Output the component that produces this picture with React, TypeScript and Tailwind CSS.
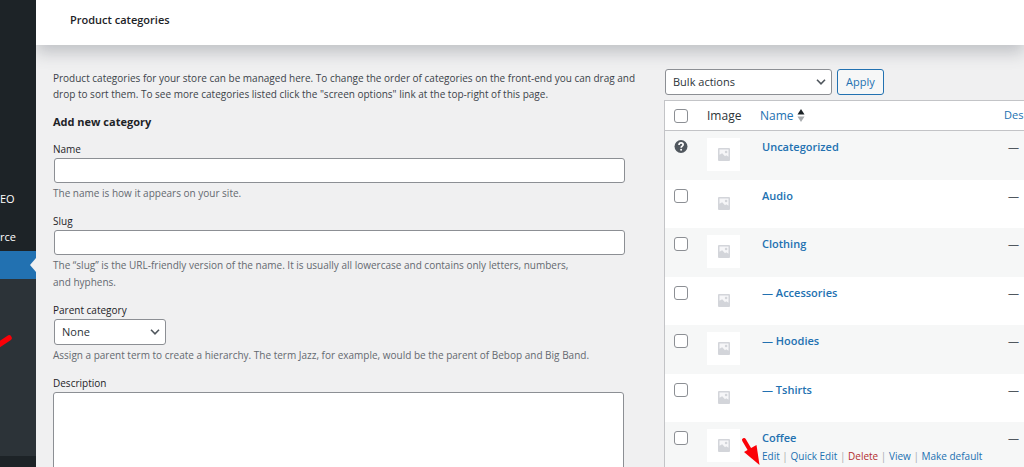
import React, { useState } from "react"

type Category = { name: string; locked?: boolean; actions?: boolean }

const CATEGORIES: Category[] = [
  { name: "Uncategorized", locked: true },
  { name: "Audio" },
  { name: "Clothing" },
  { name: "— Accessories" },
  { name: "— Hoodies" },
  { name: "— Tshirts" },
  { name: "Coffee", actions: true },
]

function Placeholder() {
  return (
    <div className="w-[33px] h-[33px] bg-white flex items-center justify-center">
      <svg width="12" height="13" viewBox="0 0 12 13" aria-hidden="true">
        <rect width="12" height="13" rx="1" fill="#d3d5da" />
        <path d="M1.5 1.5h9v7.300L8.200 7.200 7 8.300 4.200 5.200 1.500 6.800z" fill="#f6f6f8" />
        <circle cx="8.1" cy="4" r="1.300" fill="#d3d5da" />
      </svg>
    </div>
  )
}

function Chevron() {
  return (
    <svg
      className="absolute right-[6px] top-1/2 -translate-y-1/2 pointer-events-none"
      width="10"
      height="6"
      viewBox="0 0 10 6"
      fill="none"
      aria-hidden="true"
    >
      <path d="M1 0.8 5 4.8 9 0.8" stroke="#50575e" strokeWidth="1.6" />
    </svg>
  )
}

function Tick({ label }: { label: string }) {
  return (
    <input
      type="checkbox"
      aria-label={label}
      className="block appearance-none w-[14px] h-[14px] rounded-[3px] border border-[#8c8f94] bg-white checked:bg-[#2271b1]"
    />
  )
}

function Sidebar() {
  return (
    <nav className="w-9 shrink-0 overflow-hidden bg-[#1d2327] text-white leading-[38px] pt-[180px]">
      <a href="#seo" className="block">EO</a>
      <a href="#commerce" className="block h-[33px]">rce</a>
      <a href="#products" aria-label="Products" className="flex h-7 items-center justify-end bg-[#2271b1]">
        <svg width="6" height="14" viewBox="0 0 6 14" aria-hidden="true">
          <path d="M6 0v14L0 7z" fill="#f0f0f1" />
        </svg>
      </a>
      <div className="h-[177px] bg-[#2c3338] pt-[52px]">
        <svg width="14" height="20" viewBox="0 0 14 20" aria-hidden="true">
          <path d="M-3 15 9 7" stroke="#fb0007" strokeWidth="5.500" strokeLinecap="round" />
        </svg>
      </div>
    </nav>
  )
}

const field = "block w-full border border-[#8c8f94] rounded-[3px] bg-white px-[7px] outline-none focus:border-[#2271b1]"
const label = "block leading-4 mb-px text-[#1d2327]"
const help = "mt-0.5 leading-[17px] text-[#646970]"

function CategoryForm() {
  return (
    <form className="mt-[10px] mr-10 flex flex-col gap-[11px]" onSubmit={(e) => e.preventDefault()}>
      <div>
        <label htmlFor="name" className={label}>Name</label>
        <input id="name" className={`${field} ml-px h-[25px]`} />
        <p className={help}>The name is how it appears on your site.</p>
      </div>
      <div>
        <label htmlFor="slug" className={label}>Slug</label>
        <input id="slug" className={`${field} ml-px h-[25px]`} />
        <p className={`${help} max-w-[530px]`}>
          The “slug” is the URL-friendly version of the name. It is usually all lowercase and
          contains only letters, numbers, and hyphens.
        </p>
      </div>
      <div>
        <label htmlFor="parent" className={label}>Parent category</label>
        <div className="relative ml-px w-28">
          <select id="parent" className={`${field} h-[26px] appearance-none text-[11px] text-[#2c3338]`}>
            <option>None</option>
          </select>
          <Chevron />
        </div>
        <p className={help}>
          Assign a parent term to create a hierarchy. The term Jazz, for example, would be the
          parent of Bebop and Big Band.
        </p>
      </div>
      <div>
        <label htmlFor="description" className={label}>Description</label>
        <textarea id="description" rows={5} className={`${field} h-[104px] resize-none`} />
      </div>
    </form>
  )
}

function RowActions() {
  return (
    <div className="text-[10px] leading-[18px] whitespace-nowrap text-[#a7aaad]">
      <a href="#edit" className="text-[#2271b1]">Edit</a> |{" "}
      <a href="#quick" className="text-[#2271b1]">Quick Edit</a> |{" "}
      <a href="#delete" className="text-[#b32d2e]">Delete</a> |{" "}
      <a href="#view" className="text-[#2271b1]">View</a> |{" "}
      <a href="#default" className="text-[#2271b1]">Make default</a>
      {/* pointer to the edit link */}
      <svg
        className="absolute -left-[14px] top-[15px]"
        width="20"
        height="28"
        viewBox="0 0 20 28"
        aria-hidden="true"
      >
        <path d="M4 3 10.500 14" stroke="#fb0007" strokeWidth="4" strokeLinecap="round" />
        <path d="M4 15 16.500 8 19.500 28z" fill="#fb0007" />
      </svg>
    </div>
  )
}

function CategoryTable() {
  return (
    <table className="mt-[5px] w-full table-fixed border border-r-0 border-[#c3c4c7] border-separate border-spacing-0 bg-white text-[11px]">
      <colgroup>
        <col className="w-[35px]" />
        <col className="w-[54px]" />
        <col />
        <col className="w-[25px]" />
      </colgroup>
      <thead>
        <tr className="h-[30px] text-left [&>th]:border-b [&>th]:border-[#c3c4c7] [&>th]:font-normal">
          <th className="pl-[9px]"><Tick label="Select all" /></th>
          <th className="pl-[7px] text-xs text-[#2c3338]">Image</th>
          <th className="pl-[6px] text-xs">
            <a href="#sort" className="inline-flex items-center gap-[3px] text-[#2271b1]">
              Name
              <svg width="8" height="14" viewBox="0 0 8 14" aria-hidden="true">
                <path d="M4 0 7.500 5.500h-7z" fill="#1d2327" />
                <path d="M0.500 7.500h7L4 13z" fill="#a7aaad" />
              </svg>
            </a>
          </th>
          <th className="pl-[5px]">
            <a href="#desc" className="text-[#2271b1]">Des</a>
          </th>
        </tr>
      </thead>
      <tbody>
        {CATEGORIES.map((c) => (
          <tr key={c.name} className="odd:h-[49px] even:h-12 odd:bg-[#f6f7f7] align-top">
            <td className="pl-[9px] pt-[9px]">
              {c.locked ? (
                <svg className="block" width="14" height="14" viewBox="0 0 14 14" aria-hidden="true">
                  <circle cx="7" cy="6.500" r="6.500" fill="#50575e" />
                  <path d="M5 5.100c0-1.500.9-2.200 2.100-2.200s2 .7 2 1.800c0 1.500-1.900 1.500-1.900 3" fill="none" stroke="#fff" strokeWidth="1.700" />
                  <circle cx="7.100" cy="9.800" r="1" fill="#fff" />
                </svg>
              ) : (
                <Tick label={`Select ${c.name}`} />
              )}
            </td>
            <td className="pl-[7px] pt-[7px]"><Placeholder /></td>
            <td className="relative pl-2 pt-[7px]">
              <a href="#category" className="block leading-[18px] font-semibold text-[#2271b1]">{c.name}</a>
              {c.actions && <RowActions />}
            </td>
            <td className="pl-[9px] pt-[7px] leading-[18px] text-[#50575e]">—</td>
          </tr>
        ))}
      </tbody>
    </table>
  )
}

export default function App() {
  const [bulk, setBulk] = useState("Bulk actions")

  return (
    <div className="flex h-screen overflow-hidden bg-[#f0f0f1] font-['Open_Sans','Noto_Sans',sans-serif] text-[11px] text-[#3c434a]">
      <Sidebar />
      <main className="flex-1 min-w-0 overflow-hidden">
        <header className="h-[45px] bg-white pl-[34px] shadow-[0_8px_16px_0_rgba(85,93,102,0.3)]">
          <h1 className="leading-10 font-semibold text-[#1d2327]">Product categories</h1>
        </header>
        <div className="flex pl-[17px]">
          <section className="flex-1 min-w-0 pt-[25px] text-[10px]">
            <p className="leading-4 pr-5">
              Product categories for your store can be managed here. To change the order of
              categories on the front-end you can drag and drop to sort them. To see more
              categories listed click the "screen options" link at the top-right of this page.
            </p>
            <h2 className="mt-[11px] text-[11px] leading-[18px] font-bold text-[#1d2327]">Add new category</h2>
            <CategoryForm />
          </section>
          <section className="w-90 shrink-0 pt-6">
            <div className="flex gap-[5px] pl-px">
              <div className="relative w-[167px]">
                <select
                  aria-label="Bulk actions"
                  value={bulk}
                  onChange={(e) => setBulk(e.target.value)}
                  className={`${field} h-[26px] appearance-none text-[11px] text-[#2c3338]`}
                >
                  <option>Bulk actions</option>
                  <option>Delete</option>
                </select>
                <Chevron />
              </div>
              <button className="h-[26px] px-2 rounded-[3px] border border-[#2271b1] bg-[#f6f7f7] text-[#2271b1]">
                Apply
              </button>
            </div>
            <CategoryTable />
          </section>
        </div>
      </main>
    </div>
  )
}
